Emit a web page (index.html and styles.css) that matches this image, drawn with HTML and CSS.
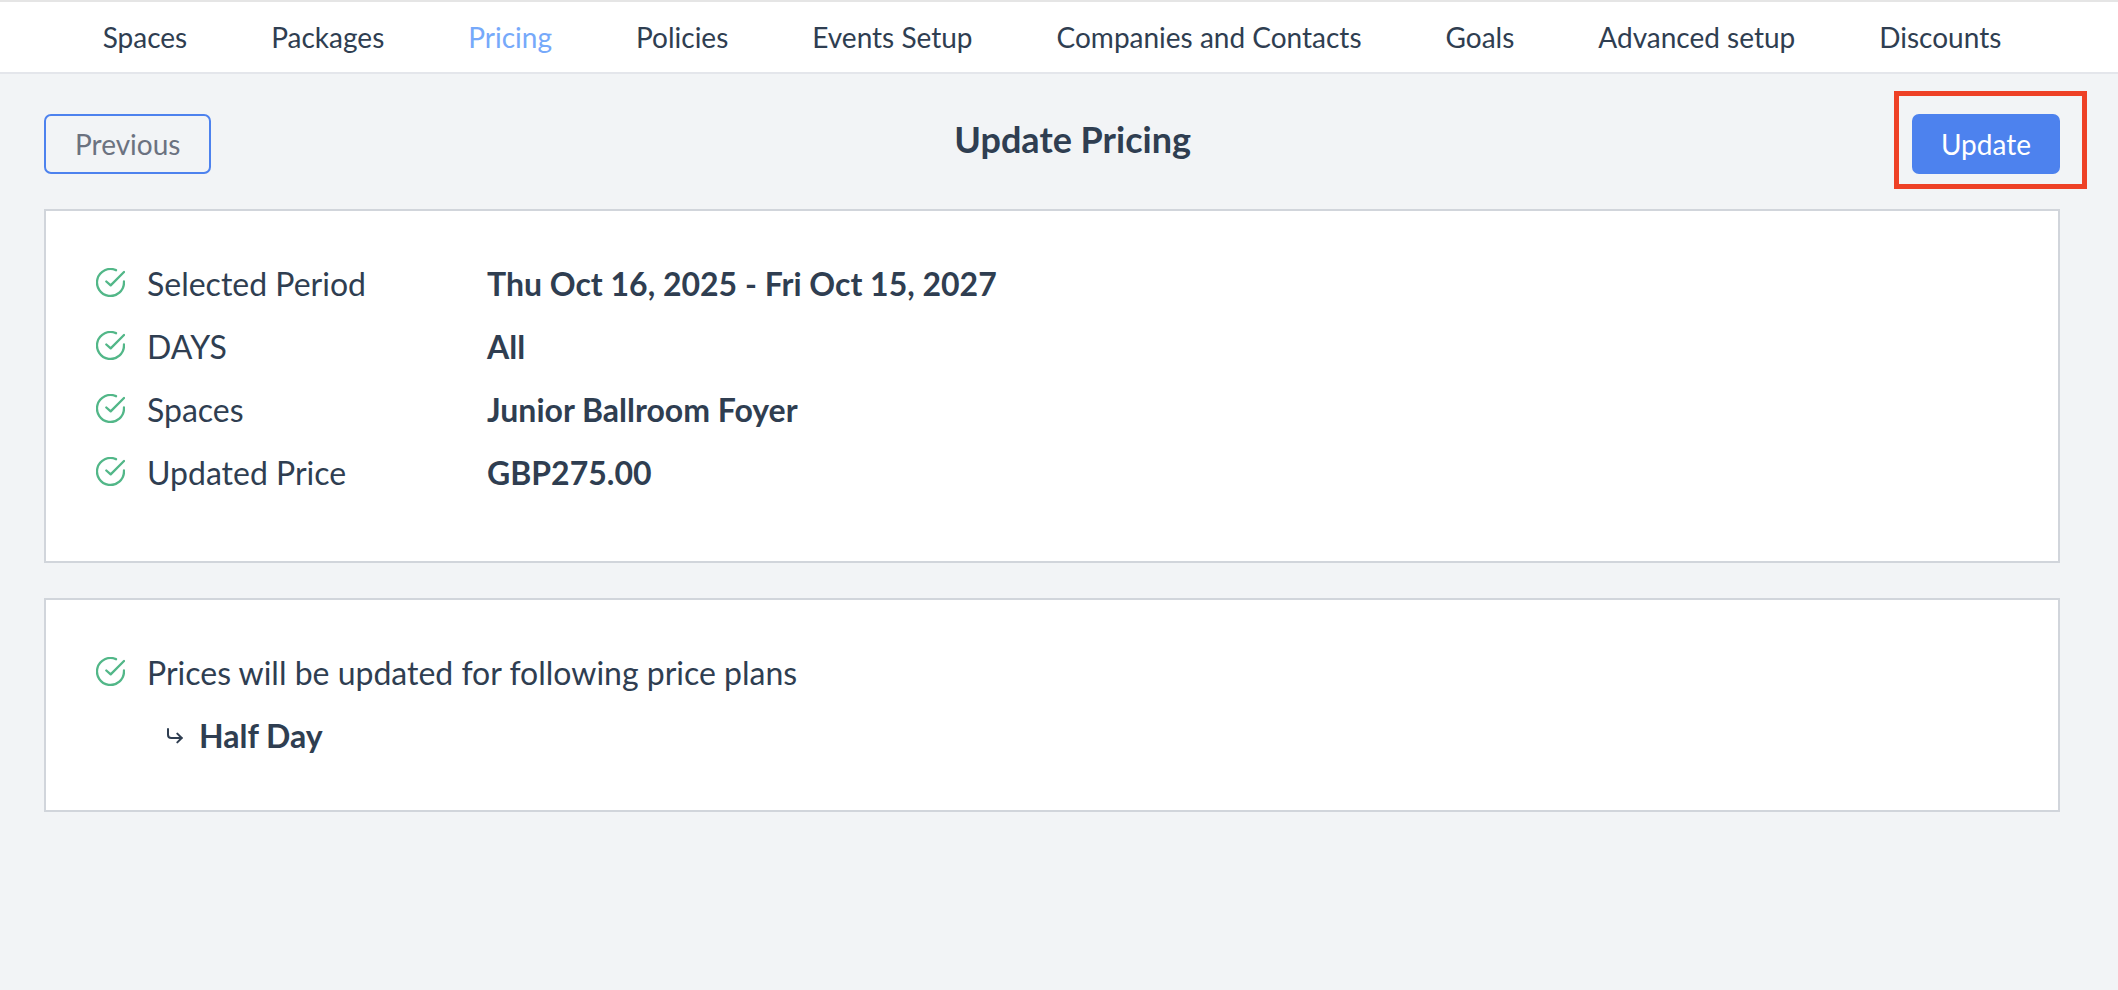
FILE: index.html
```
<!DOCTYPE html>
<html lang="en">
<head>
  <meta charset="utf-8">
  <meta name="viewport" content="width=device-width, initial-scale=1">
  <title>Update Pricing</title>
  <link rel="stylesheet" href="styles.css">
</head>
<body>
  <svg class="sprite" aria-hidden="true">
    <symbol id="check" viewBox="0 0 87 87">
      <path d="M84 40.5V43.5A40.5 40.5 0 1 1 60 6.5"/>
      <path d="M31 40.5L44 52L84 12"/>
    </symbol>
    <symbol id="arrow" viewBox="0 0 48 48">
      <path d="M3 3V20Q3 30 13 30H44"/>
      <path d="M31 17L44 30L31 43"/>
    </symbol>
  </svg>

  <nav class="nav">
    <a href="#">Spaces</a>
    <a href="#">Packages</a>
    <a href="#" class="active">Pricing</a>
    <a href="#">Policies</a>
    <a href="#">Events Setup</a>
    <a href="#">Companies and Contacts</a>
    <a href="#">Goals</a>
    <a href="#">Advanced setup</a>
    <a href="#">Discounts</a>
  </nav>

  <main class="page">
    <div class="toolbar">
      <button type="button" class="btn btn-outline">Previous</button>
      <h1 class="title">Update Pricing</h1>
      <div class="highlight">
        <button type="button" class="btn btn-primary">Update</button>
      </div>
    </div>

    <section class="card summary">
      <div class="row">
        <svg class="check"><use href="#check"/></svg>
        <span class="label">Selected Period</span>
        <strong>Thu Oct 16, 2025 - Fri Oct 15, 2027</strong>
      </div>
      <div class="row">
        <svg class="check"><use href="#check"/></svg>
        <span class="label">DAYS</span>
        <strong>All</strong>
      </div>
      <div class="row">
        <svg class="check"><use href="#check"/></svg>
        <span class="label">Spaces</span>
        <strong>Junior Ballroom Foyer</strong>
      </div>
      <div class="row">
        <svg class="check"><use href="#check"/></svg>
        <span class="label">Updated Price</span>
        <strong>GBP275.00</strong>
      </div>
    </section>

    <section class="card plans">
      <div class="row">
        <svg class="check"><use href="#check"/></svg>
        <span>Prices will be updated for following price plans</span>
      </div>
      <div class="row sub">
        <svg class="arrow"><use href="#arrow"/></svg>
        <strong>Half Day</strong>
      </div>
    </section>
  </main>
</body>
</html>
```
FILE: styles.css
```
* {box-sizing: border-box;}
body {
  margin: 0;
  background: #f2f4f6;
  color: #2f3e51;
  font-family: Lato, sans-serif;
  font-size: 32px;
  text-rendering: optimizeLegibility;
}
.sprite {display: none;}

/* top navigation */
.nav {
  display: flex;
  justify-content: center;
  gap: 84px;
  padding-right: 14px;
  background: #fff;
  border-top: 2px solid #e5e5e5;
  border-bottom: 2px solid #e4e6eb;
  font-size: 28px;
  line-height: 70px;
  white-space: nowrap;
}
.nav a {color: inherit; text-decoration: none;}
.nav .active {color: #76a9fa;}

.page {padding: 40px 58px 40px 44px;}

.toolbar {
  display: flex;
  justify-content: space-between;
  align-items: flex-start;
  margin-bottom: 35px;
}
.title {
  margin: 0 0 0 22px;
  font-size: 36px;
  line-height: 50px;
}
.btn {
  height: 60px;
  border: 2px solid #4d82ee;
  border-radius: 7px;
  font-family: inherit;
  font-size: 28px;
  cursor: pointer;
}
.btn-outline {padding: 0 29px; background: transparent; color: #6b7280;}
.btn-primary {padding: 0 27px; background: #4d82ee; color: #fff; display: block;}

/* red frame drawn over the layout, around the update button */
.highlight {position: relative;}
.highlight:before {
  content: "";
  position: absolute;
  top: -23px;
  right: -27px;
  bottom: -15px;
  left: -18px;
  border: 5px solid #ee4126;
  pointer-events: none;
}

.card {
  background: #fff;
  border: 2px solid #d1d5db;
  padding: 41px 50px 43px;
}
.card + .card {margin-top: 35px;}
.summary {padding-bottom: 57px;}

.row {display: flex; align-items: center; line-height: 63px;}
.check, .arrow {flex: none; fill: none; stroke-linecap: round; stroke-linejoin: round;}
.check {
  width: 29px;
  height: 29px;
  margin-right: 22px;
  margin-bottom: 2px;
  stroke: #52b788;
  stroke-width: 7;
}
.label {width: 340px;}
.sub {padding-left: 71px;}
.arrow {
  width: 16px;
  height: 16px;
  margin-right: 16px;
  stroke: #2f3e51;
  stroke-width: 6;
}
```
